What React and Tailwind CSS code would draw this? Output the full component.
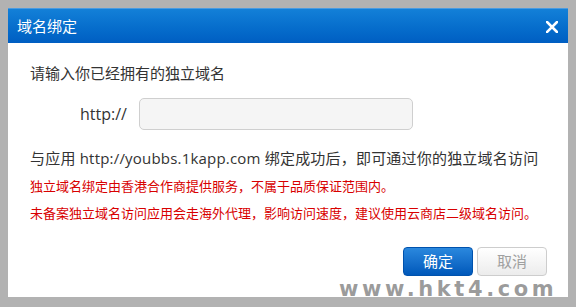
export default function App() {
  const font = { fontFamily: '"Open Sans", "Noto Sans CJK SC", sans-serif' }
  return (
    <div className="relative w-[576px] h-[307px] overflow-hidden bg-[#b2b2b2] pt-2 pl-2" style={font}>
      <div className="w-[560px] h-[289px] bg-white flex flex-col">
        {/* Title bar */}
        <div className="h-[35px] flex items-center justify-between pl-[9px] pr-[10px] bg-gradient-to-b from-[#1380d8] to-[#005ec2] border-t border-[#4a9be0]">
          <span className="text-white text-[15px]">域名绑定</span>
          <svg width="12" height="12" viewBox="0 0 12 12" className="mb-[-2px]">
            <path d="M1 1 L11 11 M11 1 L1 11" stroke="#fff" strokeWidth="2.6" strokeLinecap="square" />
          </svg>
        </div>

        {/* Body */}
        <div className="px-[22px] pt-[20px] text-[#333]">
          <div className="text-[15px] leading-[20px]">请输入你已经拥有的独立域名</div>
          <div className="flex items-center mt-[15px] pl-[50px]">
            <span className="text-[16px] w-[59px]">http://</span>
            <input className="w-[274px] h-[32px] rounded-[5px] border border-[#cfcfcf] bg-[#f5f5f5] outline-none" />
          </div>
          <div className="text-[15px] leading-[20px] mt-[18px] whitespace-nowrap tracking-[0.2px]">与应用 http://youbbs.1kapp.com 绑定成功后，即可通过你的独立域名访问</div>
          <div className="text-[13px] leading-[27px] text-[#d80000] mt-[5px]">
            <div>独立域名绑定由香港合作商提供服务，不属于品质保证范围内。</div>
            <div>未备案独立域名访问应用会走海外代理，影响访问速度，建议使用云商店二级域名访问。</div>
          </div>
        </div>

        {/* Buttons */}
        <div className="mt-auto mb-[21px] mr-[21px] flex justify-end gap-[4px]">
          <button className="w-[70px] h-[29px] rounded-[4px] border border-[#0052ad] bg-gradient-to-b from-[#2a88de] to-[#0058ba] text-white text-[15px]">确定</button>
          <button className="w-[70px] h-[29px] rounded-[4px] border border-[#cdcdcd] bg-gradient-to-b from-white to-[#ececec] text-[#a0a0a0] text-[15px]">取消</button>
        </div>
      </div>

      {/* Watermark */}
      <div
        className="absolute left-[339px] top-[276px] text-[21px] font-bold tracking-[3.6px] text-[#7a7a7a]/75 leading-[26px]"
        style={{ fontFamily: '"DejaVu Sans", sans-serif' }}
      >
        www.hkt4.com
      </div>
    </div>
  )
}
